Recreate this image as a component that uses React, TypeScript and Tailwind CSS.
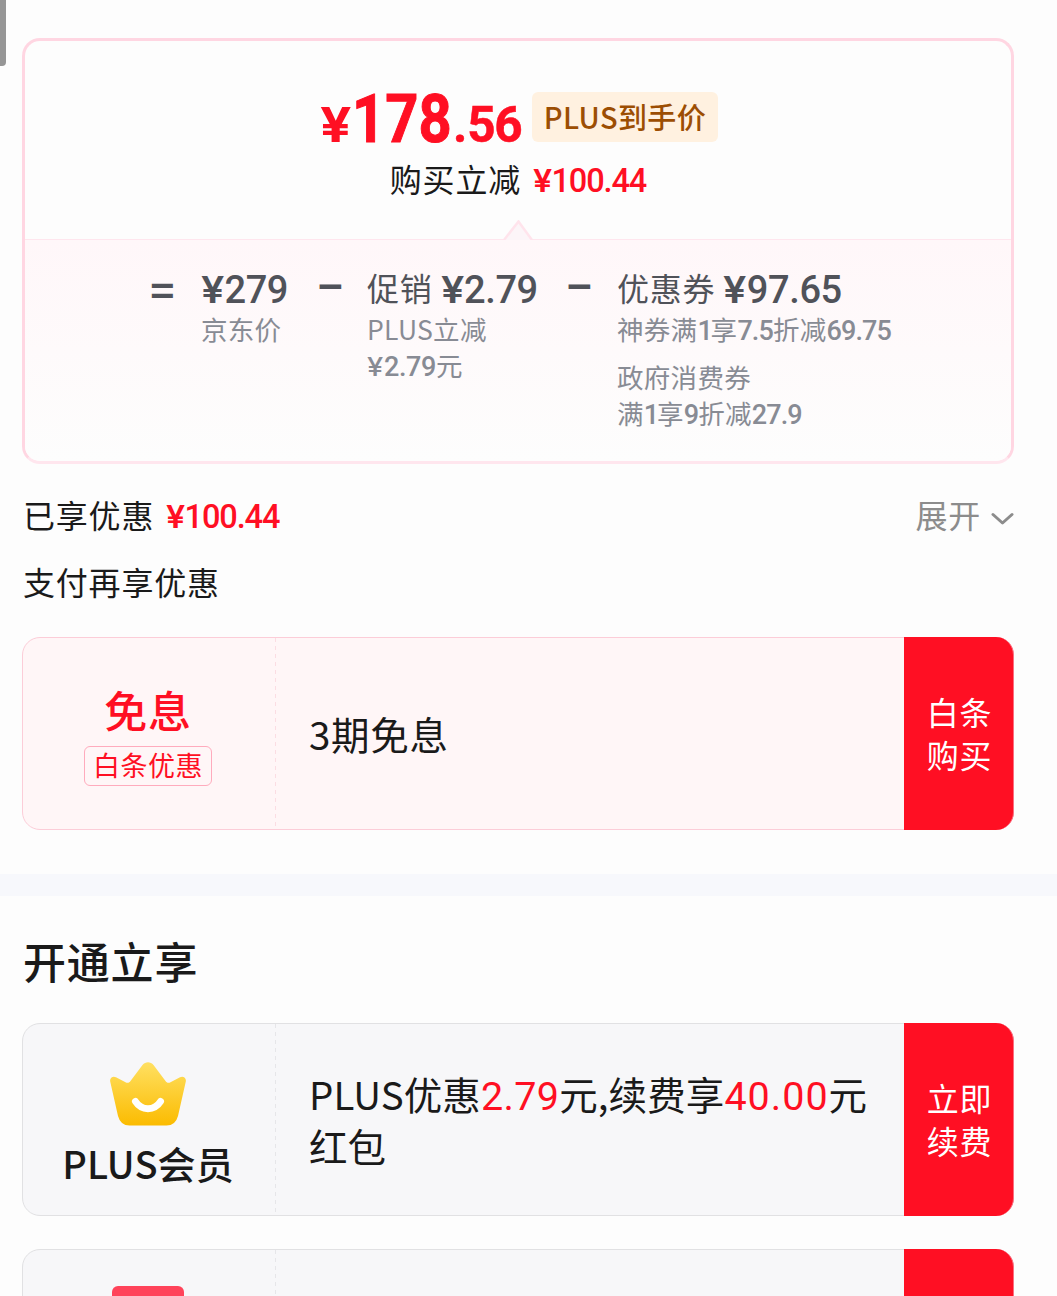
import type { ReactNode } from "react";

const CJK = "font-['Noto_Sans_CJK_SC',sans-serif]";
const NUM = "font-['Roboto','Noto_Sans_CJK_SC',sans-serif]";
const YEN = "font-['Inter',sans-serif]";

function SmallNum({ children }: { children: ReactNode }) {
  return <span className={`${NUM} text-[27px] font-medium tracking-[-0.9px]`}>{children}</span>;
}

function SmallOne() {
  return <span className={`${NUM} text-[27px] font-medium tracking-[-2.2px]`}>1</span>;
}

function MidPrice({ children }: { children: ReactNode }) {
  return (
    <span className={`${NUM} align-[-2px] text-[38px] leading-none font-medium tracking-[-0.4px] text-[#505259]`}>
      <span className={`${YEN} mr-[3px] inline-block origin-left scale-x-[1.12] text-[37px] leading-none font-semibold`}>¥</span>
      {children}
    </span>
  );
}

function RedPrice() {
  return (
    <span className={`${NUM} ml-3 text-[32.500px] leading-none font-medium tracking-[-1.1px] text-[#ff0f23]`}>
      <span className={`${YEN} mr-[2px] inline-block origin-left scale-x-[1.1] text-[31px] leading-none font-semibold`}>¥</span>
      100.44
    </span>
  );
}

function Coupon({
  left,
  body,
  action,
  pink = false,
}: {
  left: ReactNode;
  body: ReactNode;
  action?: ReactNode;
  pink?: boolean;
}) {
  return (
    <div
      className={
        pink
          ? "flex h-[193px] shrink-0 rounded-[18px] border border-[#fccdd8] bg-[#fff6f7]"
          : "flex h-[193px] shrink-0 rounded-[18px] border border-[#e1e1e3] bg-[#f7f7f9]"
      }
    >
      <div className="flex w-[252px] shrink-0 flex-col items-center pr-[2px]">{left}</div>
      <div
        className={
          pink
            ? "w-px shrink-0 bg-[repeating-linear-gradient(to_bottom,#fbdde3_0px,#fbdde3_4px,transparent_4px,transparent_8px)]"
            : "w-px shrink-0 bg-[repeating-linear-gradient(to_bottom,#e6e6e9_0px,#e6e6e9_4px,transparent_4px,transparent_8px)]"
        }
      />
      <div className="flex flex-1 items-center pl-[33px] text-[38.5px] leading-[52px] whitespace-nowrap text-[#1a1a1a]">
        <div className="-mt-[2px]">{body}</div>
      </div>
      <div className="-my-px -mr-px flex w-[110px] shrink-0 items-center justify-center rounded-r-[18px] border-r border-[#fb6f80] bg-[#ff0f23] pl-[2px] text-[32px] leading-[43px] tracking-[0.8px] text-white">
        <div className="-mt-[2px]">{action}</div>
      </div>
    </div>
  );
}

function Crown() {
  return (
    <svg className="mt-[38px] h-16 w-[76px] shrink-0" viewBox="0 0 76 64" fill="none">
      <defs>
        <linearGradient id="crown" x1="38" y1="0" x2="38" y2="64" gradientUnits="userSpaceOnUse">
          <stop stopColor="#ffe062" />
          <stop offset="1" stopColor="#fbbb00" />
        </linearGradient>
      </defs>
      <path
        d="M32.500 3C35.500-.7 40.500-.7 43.500 3L55.500 19C56.500 20.800 58.500 21.300 60.500 20.300L70 15.300C73 13.600 76.500 16 75.800 19.500L68 54Q65.500 63.500 56.500 63.500H19.500Q10.500 63.500 8 54L.2 19.500C-.5 16 3 13.600 6 15.300L15.500 20.300C17.500 21.300 19.500 20.800 20.500 19Z"
        fill="url(#crown)"
      />
      <path d="M25.500 39.500C31.500 49 44.500 49 50.500 39.500" stroke="#fff" strokeWidth="7" strokeLinecap="round" />
    </svg>
  );
}

export default function App() {
  return (
    <div className={`${CJK} relative h-[1296px] w-[1057px] overflow-hidden bg-[#fdfdfd] text-[32px] leading-[40px] tracking-[0.8px] text-[#1a1a1a]`}>
      <div className="absolute top-0 left-0 h-[66px] w-[6px] rounded-br-[4px] bg-[#969696]" />

      <div className="flex flex-col pt-[38px] pr-[43px] pl-[22px]">
        <section className="flex h-[426px] flex-col overflow-hidden rounded-[18px] border-[3px] border-[#ffd6e2] border-b-[#ffe6ee]">
          <div className="relative flex h-[198px] shrink-0 flex-col items-center pt-12">
            <div className="ml-[2px] flex h-[60px] items-baseline">
              <div className={`${NUM} flex w-[212px] items-baseline font-bold tracking-normal whitespace-nowrap text-[#ff0f23]`}>
                <span className={`${YEN} w-[32px] origin-left scale-x-[1.15] text-[48px] leading-none`}>¥</span>
                <span className="w-[101px] origin-left scale-x-[0.87] text-[66.500px] leading-[60px] [-webkit-text-stroke:1px_#ff0f23]">178</span>
                <span className="text-[49.500px] leading-none tracking-[-1.5px] [-webkit-text-stroke:0.5px_#ff0f23]"><span className="tracking-[0px]">.</span>56</span>
              </div>
              <div className="mt-[3px] flex h-[50px] w-[186px] items-center justify-center self-start rounded-[6px] bg-[#fff1e0] pb-[2px] text-[29px] font-medium tracking-[0.4px] text-[#9c4e03]">
                PLUS到手价
              </div>
            </div>
            <div className="mt-[9px] h-10 whitespace-nowrap">
              购买立减
              <RedPrice />
            </div>
            <svg className="absolute bottom-[-1px] left-[478px] z-10 h-5 w-[30px]" viewBox="0 0 30 20">
              <path d="M1 20L15.500 1.500L29 20" fill="#fcf5f8" stroke="#ffe4ec" strokeWidth="2.500" />
            </svg>
          </div>
          <div className="flex flex-1 border-t border-[#ffe6ee] bg-linear-to-b from-[#fff7f9] to-[#fdfdfd] pt-[27px] whitespace-nowrap text-[#505259]">
            <div className={`${YEN} h-10 w-[176px] shrink-0 pl-[122px] text-[46px] font-medium`}>=</div>
            <div className="w-[116px] shrink-0">
              <div className="h-10"><MidPrice>279</MidPrice></div>
              <div className="mt-1 text-[26.500px] leading-[36px] tracking-[0.3px] text-[#888b94]">京东价</div>
            </div>
            <div className={`${YEN} -mt-[4px] -ml-[2px] h-10 w-[52px] shrink-0 text-[46px] font-medium`}>−</div>
            <div className="w-[199px] shrink-0">
              <div className="h-10"><span className="mr-[8px]">促销</span><MidPrice>2.79</MidPrice></div>
              <div className="mt-1 text-[26.500px] leading-[36px] tracking-[0.3px] text-[#888b94]">
                <div>PLUS立减</div>
                <div>
                  <span className={`${YEN} mr-[3px] inline-block origin-left scale-x-[1.12] text-[26px] leading-none font-medium tracking-[-0.5px]`}>¥</span>
                  <span className={`${NUM} text-[27px] font-medium tracking-[-0.4px]`}>2.79</span>元
                </div>
              </div>
            </div>
            <div className={`${YEN} -mt-[4px] -ml-[2px] h-10 w-[53px] shrink-0 text-[46px] font-medium`}>−</div>
            <div>
              <div className="h-10"><span className="mr-[8px]">优惠券</span><MidPrice>97.65</MidPrice></div>
              <div className="mt-1 text-[26.500px] leading-[36px] tracking-[0.3px] text-[#888b94]">
                <div>神券满<SmallOne />享<SmallNum>7.5</SmallNum>折减<SmallNum>69.75</SmallNum></div>
                <div className="mt-[10px]">政府消费券</div>
                <div>满<SmallOne />享<SmallNum>9</SmallNum>折减<SmallNum>27.9</SmallNum></div>
              </div>
            </div>
          </div>
        </section>

        <div className="mt-[30px] flex h-10 justify-between whitespace-nowrap">
          <div className="pl-px">
            已享优惠
            <RedPrice />
          </div>
          <div className="flex items-center text-[#8c8c8c]">
            展开
            <svg className="mt-[9px] ml-[9px] h-4 w-6" viewBox="0 0 24 16" fill="none">
              <path d="M3 3.500L12.500 12L22 3.500" stroke="#8c8c8c" strokeWidth="3" strokeLinecap="round" strokeLinejoin="round" />
            </svg>
          </div>
        </div>
        <div className="mt-[27px] mb-[36px] h-10 pl-px">支付再享优惠</div>

        <Coupon
          pink
          left={
            <>
              <div className="mt-[47px] h-12 text-[43px] leading-[48px] font-medium text-[#ff0f23]">免息</div>
              <div className="mt-[13px] flex h-10 w-[128px] items-center justify-center rounded-[6px] border border-[#ffabbd] pb-[3px] text-[27px] leading-none tracking-[0.5px] text-[#ff0f23]">
                白条优惠
              </div>
            </>
          }
          body={<span className="tracking-[0.7px]">3期免息</span>}
          action={<>白条<br />购买</>}
        />
      </div>

      <div className="mt-11 h-[22px] bg-[#f7f8fc]" />

      <div className="flex flex-col pr-[43px] pl-[22px]">
        <h2 className="mt-[38px] mb-[37px] h-[52px] pl-px text-[43px] leading-[52px] font-medium">开通立享</h2>
        <Coupon
          left={
            <>
              <Crown />
              <div className="mt-[14px] text-[38px] leading-[46px] font-medium tracking-[0.1px]">PLUS会员</div>
            </>
          }
          body={
            <div className="tracking-[0.1px]">
              PLUS优惠
              <span className={`${NUM} text-[39.500px] leading-none tracking-[0.3px] text-[#ff0f23]`}>2.79</span>
              元,续费享
              <span className={`${NUM} text-[39.500px] leading-none tracking-[1px] text-[#ff0f23]`}>40.00</span>
              元<br />
              红包
            </div>
          }
          action={<>立即<br />续费</>}
        />
        <div className="h-[33px]" />
        <Coupon
          left={<div className="mt-9 h-[72px] w-[72px] rounded-[6px] bg-[#ff435a]" />}
          body=""
        />
      </div>
    </div>
  );
}
